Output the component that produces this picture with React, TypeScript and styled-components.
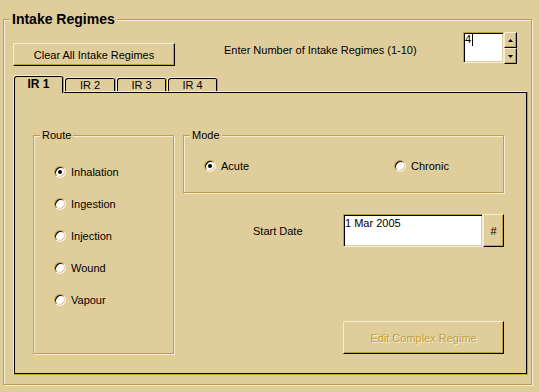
import React from 'react';
import styled, { createGlobalStyle } from 'styled-components';

const C = {
  face: '#e0cd9c',
  light: '#f5ecd4',
  shadow: '#c0a040',
  dark: '#000000',
  white: '#ffffff',
};

const Global = createGlobalStyle`
  html, body { margin: 0; padding: 0; background: ${C.face}; }
  body {
    width: 539px; height: 392px; overflow: hidden;
    font-family: "Liberation Sans", Arial, sans-serif;
    font-size: 11px; color: #000;
  }
  * { box-sizing: border-box; }
`;

const Window = styled.div`
  width: 539px;
  height: 392px;
  padding: 11px 0 0 3px;
  background: ${C.face};
`;

const Frame = styled.fieldset`
  margin: 0;
  min-width: 0;
  width: 529px;
  padding: 0 3px 9px 9px;
  display: flex;
  flex-direction: column;
  border: 1px solid ${C.shadow};
  box-shadow: inset 1px 1px 0 ${C.light}, 1px 1px 0 ${C.light};
`;

const FrameTitle = styled.legend`
  margin-left: -3px;
  padding: 0 2px;
  font-size: 14px;
  font-weight: 700;
  line-height: 17px;
  background: ${C.face};
`;

const Header = styled.div`
  display: flex;
  align-items: flex-start;
  padding-top: 4px;
`;

const Button = styled.button<{ $w: number; $h: number; $disabled?: boolean }>`
  width: ${(p) => p.$w}px;
  height: ${(p) => p.$h}px;
  margin: 0;
  padding: 0;
  font-family: "Liberation Sans", Arial, sans-serif;
  font-size: 11px;
  background: ${C.face};
  color: ${(p) => (p.$disabled ? C.shadow : '#000')};
  text-shadow: ${(p) => (p.$disabled ? `1px 1px 0 ${C.light}` : 'none')};
  border: 1px solid;
  border-color: ${C.light} ${C.dark} ${C.dark} ${C.light};
  box-shadow: inset -1px -1px 0 ${C.shadow};
  display: flex;
  align-items: center;
  justify-content: center;
`;

const ClearButton = styled(Button)`
  margin-top: 11px;
`;

const HeaderLabel = styled.span`
  margin: 12px 0 0 49px;
  line-height: 13px;
`;

const Spin = styled.div`
  margin: 0 11px 0 auto;
  display: flex;
`;

const SunkenField = styled.div<{ $w: number; $h: number }>`
  width: ${(p) => p.$w}px;
  height: ${(p) => p.$h}px;
  background: ${C.white};
  border: 1px solid;
  border-color: ${C.shadow} ${C.light} ${C.light} ${C.shadow};
  box-shadow: inset 1px 1px 0 ${C.dark}, inset -1px -1px 0 ${C.face};
  padding: 2px 1px;
  line-height: 13px;
  display: flex;
  align-items: flex-start;
`;

const SpinValue = styled(SunkenField)`
  padding: 0 1px;
`;

const Caret = styled.span`
  display: inline-block;
  width: 1px;
  height: 12px;
  margin: 1px 0 0 1px;
  background: #000;
`;

const SpinButtons = styled.div`
  display: flex;
  flex-direction: column;
`;

const SpinButton = styled.div`
  width: 13px;
  height: 16px;
  background: ${C.face};
  border: 1px solid;
  border-color: ${C.light} ${C.dark} ${C.dark} ${C.light};
  box-shadow: inset -1px -1px 0 ${C.shadow};
  display: flex;
  align-items: center;
  justify-content: center;
`;

const Tabs = styled.div`
  display: flex;
  align-items: flex-end;
  height: 16px;
  margin-top: 9px;
`;

const Tab = styled.div<{ $active?: boolean; $w: number }>`
  width: ${(p) => p.$w}px;
  height: ${(p) => (p.$active ? 18 : 14)}px;
  margin-bottom: ${(p) => (p.$active ? -2 : 0)}px;
  position: relative;
  z-index: ${(p) => (p.$active ? 2 : 0)};
  display: flex;
  align-items: center;
  justify-content: center;
  padding-bottom: ${(p) => (p.$active ? 2 : 0)}px;
  font-size: ${(p) => (p.$active ? 12 : 11)}px;
  font-weight: ${(p) => (p.$active ? 700 : 400)};
  background: ${C.face};
  border: 1px solid;
  border-bottom: none;
  border-color: ${C.light} ${C.shadow} transparent ${C.light};
  border-radius: 3px 3px 0 0;
  box-shadow: inset 1px 1px 0 ${C.dark}, inset -1px 0 0 ${C.dark};
`;

const Panel = styled.div`
  width: 515px;
  height: 284px;
  border: 1px solid;
  border-color: ${C.light} ${C.shadow} ${C.shadow} ${C.light};
  box-shadow: inset 1px 1px 0 ${C.dark}, inset -1px -1px 0 ${C.dark};
  padding: 37px 0 0 19px;
  display: flex;
  align-items: flex-start;
`;

const GroupBox = styled.fieldset<{ $w: number; $h: number }>`
  margin: 0;
  min-width: 0;
  padding: 0;
  width: ${(p) => p.$w}px;
  height: ${(p) => p.$h}px;
  border: 1px solid ${C.shadow};
  box-shadow: inset 1px 1px 0 ${C.light}, 1px 1px 0 ${C.light};
`;

const GroupTitle = styled.legend`
  margin-left: 6px;
  padding: 0 2px;
  font-size: 11px;
  line-height: 13px;
  background: ${C.face};
`;

const RadioList = styled.div`
  display: flex;
  flex-direction: column;
  gap: 20px;
  padding: 24px 0 0 20px;
`;

const RadioRow = styled.div`
  display: flex;
  padding: 18px 0 0 20px;
`;

const RadioOption = styled.label<{ $w?: number }>`
  display: flex;
  align-items: center;
  height: 12px;
  width: ${(p) => (p.$w ? `${p.$w}px` : 'auto')};
  line-height: 13px;
`;

const RadioCircle = styled.span<{ $checked?: boolean }>`
  width: 12px;
  height: 12px;
  flex: none;
  border-radius: 50%;
  background: ${C.white};
  border: 1px solid;
  border-color: ${C.shadow} ${C.light} ${C.light} ${C.shadow};
  box-shadow: inset 1px 1px 0 ${C.dark}, inset -1px -1px 0 ${C.face};
  display: flex;
  align-items: center;
  justify-content: center;
  &::after {
    content: '';
    width: 4px;
    height: 4px;
    border-radius: 50%;
    background: #000;
    display: ${(p) => (p.$checked ? 'block' : 'none')};
  }
`;

const RadioText = styled.span`
  margin-left: 5px;
`;

const RightColumn = styled.div`
  margin-left: 9px;
  width: 321px;
  display: flex;
  flex-direction: column;
`;

const DateRow = styled.div`
  display: flex;
  align-items: center;
  margin-top: 21px;
`;

const DateLabel = styled.span`
  width: 160px;
  padding-left: 70px;
`;

const EditButton = styled(Button)`
  margin: 74px 0 0 160px;
`;

const Radio: React.FC<{ label: string; checked?: boolean; w?: number }> = ({ label, checked, w }) => (
  <RadioOption $w={w}>
    <RadioCircle $checked={checked} />
    <RadioText>{label}</RadioText>
  </RadioOption>
);

const Arrow: React.FC<{ up?: boolean }> = ({ up }) => (
  <svg width="5" height="3" viewBox="0 0 5 3">
    <polygon points={up ? '2.5,0 5,3 0,3' : '0,0 5,0 2.5,3'} fill="#000" />
  </svg>
);

export default function App() {
  const routes = ['Inhalation', 'Ingestion', 'Injection', 'Wound', 'Vapour'];
  return (
    <>
      <Global />
      <Window>
        <Frame>
          <FrameTitle>Intake Regimes</FrameTitle>
          <Header>
            <ClearButton $w={162} $h={23}>Clear All Intake Regimes</ClearButton>
            <HeaderLabel>Enter Number of Intake Regimes (1-10)</HeaderLabel>
            <Spin>
              <SpinValue $w={41} $h={31}>
                4<Caret />
              </SpinValue>
              <SpinButtons>
                <SpinButton>
                  <Arrow up />
                </SpinButton>
                <SpinButton>
                  <Arrow />
                </SpinButton>
              </SpinButtons>
            </Spin>
          </Header>
          <Tabs>
            <Tab $active $w={51}>IR 1</Tab>
            <Tab $w={52}>IR 2</Tab>
            <Tab $w={51}>IR 3</Tab>
            <Tab $w={51}>IR 4</Tab>
          </Tabs>
          <Panel>
            <GroupBox $w={141} $h={225}>
              <GroupTitle>Route</GroupTitle>
              <RadioList>
                {routes.map((r, i) => (
                  <Radio key={r} label={r} checked={i === 0} />
                ))}
              </RadioList>
            </GroupBox>
            <RightColumn>
              <GroupBox $w={321} $h={64}>
                <GroupTitle>Mode</GroupTitle>
                <RadioRow>
                  <Radio label="Acute" checked w={190} />
                  <Radio label="Chronic" />
                </RadioRow>
              </GroupBox>
              <DateRow>
                <DateLabel>Start Date</DateLabel>
                <SunkenField $w={140} $h={33}>1 Mar 2005</SunkenField>
                <Button $w={21} $h={33}>#</Button>
              </DateRow>
              <EditButton $w={161} $h={33} $disabled>
                Edit Complex Regime
              </EditButton>
            </RightColumn>
          </Panel>
        </Frame>
      </Window>
    </>
  );
}
